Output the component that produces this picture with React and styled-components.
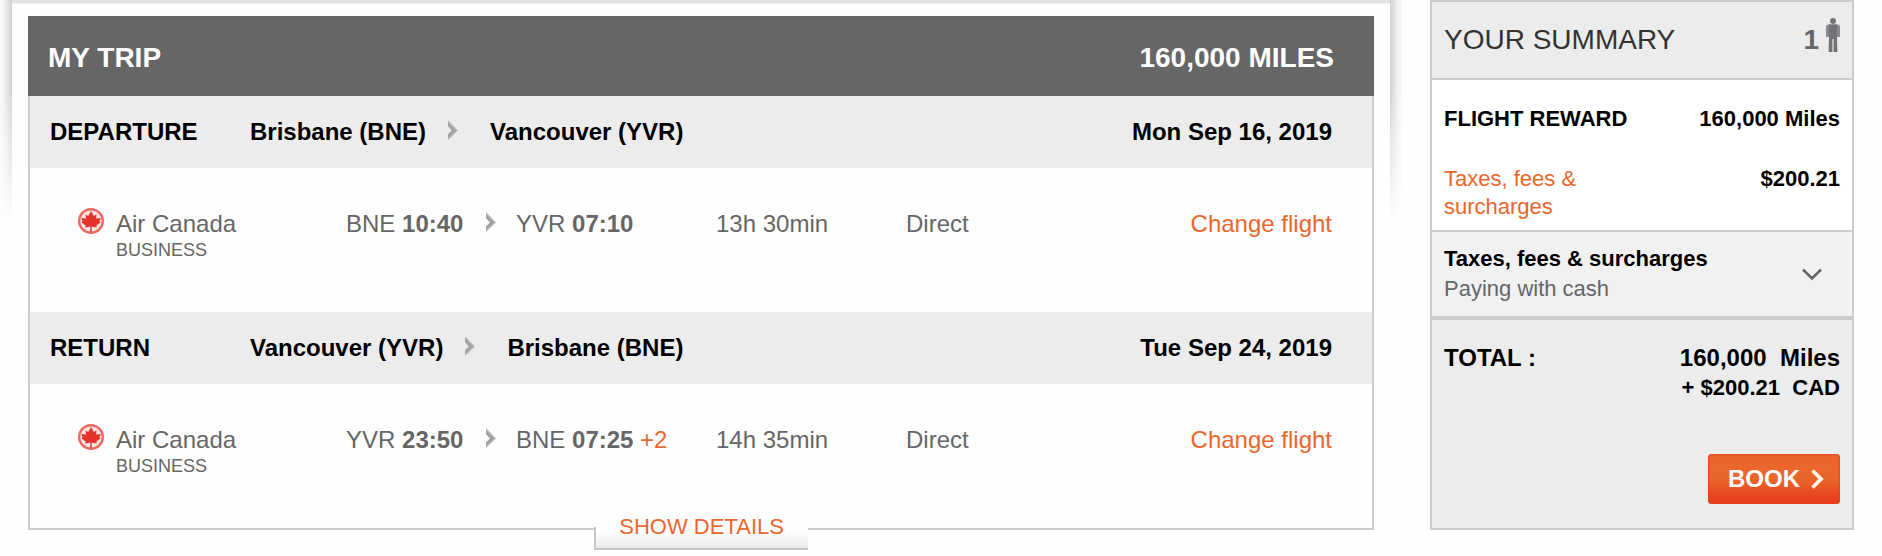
import React from "react";
import styled, { createGlobalStyle } from "styled-components";

const legs = [
  {
    label: "DEPARTURE",
    from: "Brisbane (BNE)",
    to: "Vancouver (YVR)",
    date: "Mon Sep 16, 2019",
    airline: "Air Canada",
    cabin: "BUSINESS",
    depart: { code: "BNE", time: "10:40" },
    arrive: { code: "YVR", time: "07:10" },
    duration: "13h 30min",
    stops: "Direct",
  },
  {
    label: "RETURN",
    from: "Vancouver (YVR)",
    to: "Brisbane (BNE)",
    date: "Tue Sep 24, 2019",
    airline: "Air Canada",
    cabin: "BUSINESS",
    depart: { code: "YVR", time: "23:50" },
    arrive: { code: "BNE", time: "07:25", plusDays: "+2" },
    duration: "14h 35min",
    stops: "Direct",
  },
];

const Arrow = () => (
  <svg width="10" height="20" viewBox="0 0 10 20" aria-hidden="true">
    <path d="M0 0 L10 10.5 L0 20 V14.5 L4 10.5 L0 6 Z" fill="#b8b8b8" />
    <path d="M0 2.5 L8 10.5 L0 18 V14.5 L4 10.5 L0 6 Z" fill="#a0a0a0" />
  </svg>
);

const AirlineLogo = () => (
  <svg width="26" height="26" viewBox="0 0 26 26" aria-hidden="true">
    <circle cx="13" cy="13" r="11.8" fill="#fbe4e2" stroke="#ea6a62" strokeWidth="2.4" />
    <path
      d="M13 3 L15.8 8 L18.6 6.6 L18 10.6 L22.8 10 L21.4 13 L22.4 14.4 L18.4 17.4 L18.8 19.4 L13.7 18.6 V24 H12.3 V18.6 L7.2 19.4 L7.6 17.4 L3.6 14.4 L4.6 13 L3.2 10 L8 10.6 L7.4 6.6 L10.2 8 Z"
      fill="#e6332a"
    />
  </svg>
);

const Person = () => (
  <svg width="14" height="34" viewBox="0 0 14 34" aria-hidden="true">
    <circle cx="7" cy="3" r="3" fill="#77777b" />
    <path d="M2.5 6.5 H11.5 Q14 6.5 14 9.5 V19 H0 V9.5 Q0 6.5 2.5 6.5 Z" fill="#8a8a8e" />
    <path d="M3 6.5 H11 V19 L11.4 34 H7.6 V21 H6.4 V34 H2.6 L3 19 Z" fill="#727277" />
  </svg>
);

const App = () => {
  return (
    <>
      <GlobalStyle />
      <StPage>
        <StTripCard>
          <StTripPanel>
            <StTripHeader>
              <StTripTitle>MY TRIP</StTripTitle>
              <span>160,000 MILES</span>
            </StTripHeader>
            <StLegs>
              {legs.map((leg) => (
                <section key={leg.label}>
                  <StLegHeader>
                    <StLegLabel>{leg.label}</StLegLabel>
                    <StRoute>
                      <span>{leg.from}</span>
                      <Arrow />
                      <span>{leg.to}</span>
                    </StRoute>
                    <span>{leg.date}</span>
                  </StLegHeader>
                  <StFlight>
                    <AirlineLogo />
                    <div>
                      {leg.airline}
                      <StCabin>{leg.cabin}</StCabin>
                    </div>
                    <div>
                      {leg.depart.code} <b>{leg.depart.time}</b>
                    </div>
                    <StFlightArrow>
                      <Arrow />
                    </StFlightArrow>
                    <div>
                      {leg.arrive.code} <b>{leg.arrive.time}</b>{" "}
                      <StPlusDays>{leg.arrive.plusDays}</StPlusDays>
                    </div>
                    <div>{leg.duration}</div>
                    <div>{leg.stops}</div>
                    <StChangeLink href="#change">Change flight</StChangeLink>
                  </StFlight>
                </section>
              ))}
            </StLegs>
            <StDetailsButton type="button">SHOW DETAILS</StDetailsButton>
          </StTripPanel>
        </StTripCard>

        <StSummary>
          <StSummaryHeader>
            <StSummaryTitle>YOUR SUMMARY</StSummaryTitle>
            <StTravellers>
              1
              <Person />
            </StTravellers>
          </StSummaryHeader>
          <StCosts>
            <StCostRow>
              <b>FLIGHT REWARD</b>
              <b>160,000 Miles</b>
            </StCostRow>
            <StCostRow>
              <StTaxesLink href="#taxes">Taxes, fees & surcharges</StTaxesLink>
              <b>$200.21</b>
            </StCostRow>
          </StCosts>
          <StPayment type="button">
            <span>
              <StPaymentTitle>Taxes, fees & surcharges</StPaymentTitle>
              Paying with cash
            </span>
            <svg width="20" height="13" viewBox="0 0 20 13" aria-hidden="true">
              <path d="M1 1.5 L10 10.5 L19 1.5" fill="none" stroke="#666" strokeWidth="2.6" />
            </svg>
          </StPayment>
          <StTotal>
            <StTotalRow>
              <span>TOTAL :</span>
              <StTotalAmount>
                160,000{"\u00a0 "}Miles
                <StTotalCash>+ $200.21{"\u00a0 "}CAD</StTotalCash>
              </StTotalAmount>
            </StTotalRow>
            <StBookButton type="button">
              BOOK
              <svg width="14" height="20" viewBox="0 0 14 20" aria-hidden="true">
                <path d="M2.5 1.5 L11 10 L2.5 18.5" fill="none" stroke="#fff" strokeOpacity="0.9" strokeWidth="3.8" />
              </svg>
            </StBookButton>
          </StTotal>
        </StSummary>
      </StPage>
    </>
  );
};

export default App;

const GlobalStyle = createGlobalStyle`
  * {
    box-sizing: border-box;
  }

  body {
    margin: 0;
    background-color: #fefefe;
    font-family: "Liberation Sans", Arial, sans-serif;
  }

  svg {
    display: block;
    flex-shrink: 0;
  }

  a {
    text-decoration: none;
  }

  button {
    font-family: inherit;
    cursor: pointer;
  }
`;

const StPage = styled.div`
  display: flex;
  align-items: flex-start;
  gap: 40px;
  padding: 0 28px 0 12px;
`;

const StTripCard = styled.main`
  position: relative;
  flex: 1;
  padding: 16px 16px 26px;
  background: linear-gradient(#e4e4e4 0 3px, #f1f1f1 3px 4px, transparent 4px);

  &::before,
  &::after {
    content: "";
    position: absolute;
    top: 0;
    width: 12px;
    height: 224px;
    mask-image: linear-gradient(#000 40%, transparent);
  }

  &::before {
    right: 100%;
    background: linear-gradient(to left, #d2d2d2, #eee 60%, #fafafa);
  }

  &::after {
    left: 100%;
    background: linear-gradient(to right, #d2d2d2, #eee 60%, #fafafa);
  }
`;

const StTripPanel = styled.div`
  position: relative;
`;

const StTripHeader = styled.header`
  display: flex;
  justify-content: space-between;
  padding: 26px 40px 22px 20px;
  background-color: #666;
  color: #fff;
  font-size: 28px;
  font-weight: 700;
  line-height: 32px;
`;

const StTripTitle = styled.h1`
  margin: 0;
  font-size: 28px;
`;

const StLegs = styled.div`
  border: 2px solid #ccc;
  border-top: none;
`;

const StLegHeader = styled.div`
  display: flex;
  padding: 22px 40px 22px 20px;
  background-color: #ececec;
  color: #000;
  font-size: 24px;
  font-weight: 700;
  line-height: 28px;
`;

const StLegLabel = styled.h2`
  width: 200px;
  margin: 0;
  font-size: 24px;
`;

const StRoute = styled.div`
  display: flex;
  flex: 1;

  svg {
    margin: 2px 32px 0 22px;
  }
`;

const StFlight = styled.div`
  display: grid;
  grid-template-columns: 38px 230fr 140fr 30px 200fr 190fr 190fr 236fr;
  padding: 40px 40px 52px 48px;
  color: #666;
  font-size: 24px;
  line-height: 32px;
`;

const StCabin = styled.div`
  font-size: 18px;
  line-height: 20px;
`;

const StFlightArrow = styled.div`
  padding-top: 4px;
`;

const StPlusDays = styled.span`
  color: #eb662b;
`;

const StChangeLink = styled.a`
  justify-self: end;
  color: #eb662b;
`;

const StDetailsButton = styled.button`
  position: absolute;
  left: 42%;
  bottom: -20px;
  height: 48px;
  margin-left: 1px;
  padding: 4px 24px 0 23px;
  border: solid #c8c8c8;
  border-width: 0 0 2px 2px;
  border-image: linear-gradient(transparent 26px, #c8c8c8 26px) 2;
  background: linear-gradient(#fefefe 65%, #ebebeb);
  color: #eb662b;
  font-size: 22px;
  line-height: 28px;
`;

const StSummary = styled.aside`
  width: 424px;
  border: 2px solid #ccc;
  background-color: #ececec;
  color: #000;
  font-size: 22px;
  line-height: 28px;
`;

const StSummaryHeader = styled.header`
  display: flex;
  justify-content: space-between;
  height: 78px;
  padding: 16px 12px 0;
  border-bottom: 2px solid #ccc;
  font-size: 28px;
  line-height: 44px;
`;

const StSummaryTitle = styled.h2`
  margin: 0;
  color: #333;
  font-size: 28px;
  font-weight: 400;
`;

const StTravellers = styled.div`
  display: flex;
  gap: 7px;
  color: #666;
  font-weight: 700;
`;

const StCosts = styled.div`
  display: grid;
  gap: 32px;
  padding: 25px 12px 9px;
  border-bottom: 2px solid #ccc;
  background-color: #fff;
`;

const StCostRow = styled.div`
  display: flex;
  justify-content: space-between;
`;

const StTaxesLink = styled.a`
  width: 50%;
  color: #eb662b;
`;

const StPayment = styled.button`
  display: flex;
  align-items: center;
  justify-content: space-between;
  width: 100%;
  padding: 12px 30px 12px 12px;
  border: none;
  border-bottom: 4px solid #ccc;
  background-color: #f1f1f1;
  color: #666;
  font-size: 22px;
  line-height: 30px;
  text-align: left;
`;

const StPaymentTitle = styled.b`
  display: block;
  color: #000;
`;

const StTotal = styled.div`
  padding: 23px 12px 24px;
`;

const StTotalRow = styled.div`
  display: flex;
  justify-content: space-between;
  font-size: 24px;
  font-weight: 700;
  line-height: 30px;
`;

const StTotalAmount = styled.div`
  text-align: right;
`;

const StTotalCash = styled.div`
  font-size: 22px;
`;

const StBookButton = styled.button`
  display: flex;
  align-items: center;
  gap: 10px;
  height: 50px;
  margin: 51px 0 0 auto;
  padding: 0 16px 0 20px;
  border: none;
  border-radius: 4px;
  background: linear-gradient(#eb662b 50%, #e8401f 90%);
  box-shadow: inset 0 0 2px 1px #e8401f;
  color: #fff;
  font-size: 24px;
  font-weight: 700;
`;
